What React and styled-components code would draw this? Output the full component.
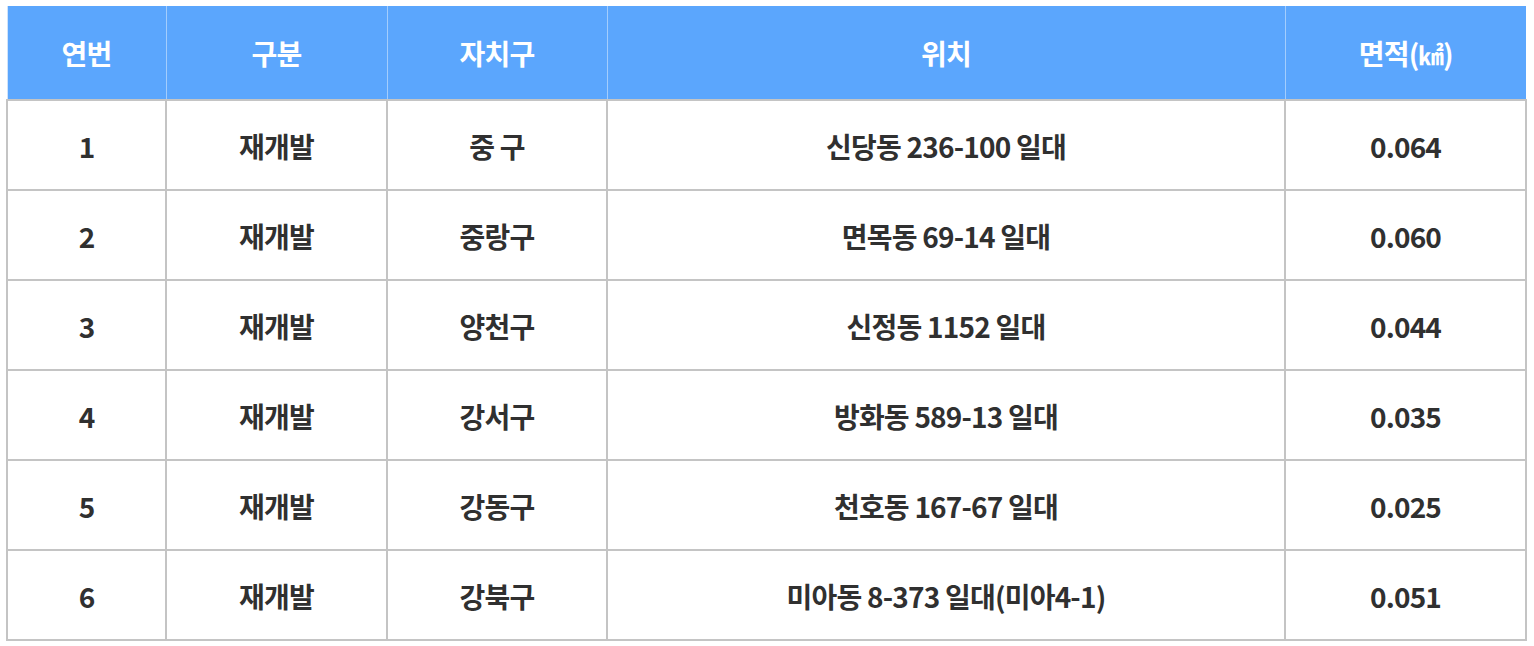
import React from "react";
import styled, { createGlobalStyle } from "styled-components";

const GlobalStyle = createGlobalStyle`
  html, body { margin: 0; padding: 0; background: #ffffff; }
  body { font-family: "Noto Sans CJK KR", "Noto Sans", sans-serif; }
`;

const Page = styled.div`
  padding: 6px 9px 6px 6px;
`;

const Table = styled.table`
  width: 1519px;
  border-collapse: collapse;
  table-layout: fixed;
  font-family: "Noto Sans CJK KR", "Noto Sans", sans-serif;
  font-weight: 700;
  font-size: 28px;
  letter-spacing: -0.8px;
`;

const HeadCell = styled.th`
  height: 93px;
  padding: 0;
  background: #5ba6fd;
  color: #ffffff;
  font-weight: 700;
  text-align: center;
  vertical-align: middle;
  border-left: 1px solid #a3cdfd;
  border-right: 1px solid #a3cdfd;
  &:first-child { border-left: 1px solid #cfe3fb; }
  &:last-child { border-right: none; }
`;

const Cell = styled.td`
  height: 90px;
  padding: 1px 0 0;
  box-sizing: border-box;
  color: #303030;
  text-align: center;
  vertical-align: middle;
  border: 2px solid #c4c4c4;
`;

const Sup = styled.span`
  font-size: 0.9em;
`;

const cols = [159, 221, 220, 678, 241];

const rows = [
  ["1", "재개발", "중 구", "신당동 236-100 일대", "0.064"],
  ["2", "재개발", "중랑구", "면목동 69-14 일대", "0.060"],
  ["3", "재개발", "양천구", "신정동 1152 일대", "0.044"],
  ["4", "재개발", "강서구", "방화동 589-13 일대", "0.035"],
  ["5", "재개발", "강동구", "천호동 167-67 일대", "0.025"],
  ["6", "재개발", "강북구", "미아동 8-373 일대(미아4-1)", "0.051"],
];

export default function App() {
  return (
    <Page>
      <GlobalStyle />
      <Table>
        <colgroup>
          {cols.map((w, i) => (
            <col key={i} style={{ width: w }} />
          ))}
        </colgroup>
        <thead>
          <tr>
            <HeadCell>연번</HeadCell>
            <HeadCell>구분</HeadCell>
            <HeadCell>자치구</HeadCell>
            <HeadCell>위치</HeadCell>
            <HeadCell>
              면적(<Sup>㎢</Sup>)
            </HeadCell>
          </tr>
        </thead>
        <tbody>
          {rows.map((r) => (
            <tr key={r[0]}>
              {r.map((c, i) => (
                <Cell key={i}>{c}</Cell>
              ))}
            </tr>
          ))}
        </tbody>
      </Table>
    </Page>
  );
}
